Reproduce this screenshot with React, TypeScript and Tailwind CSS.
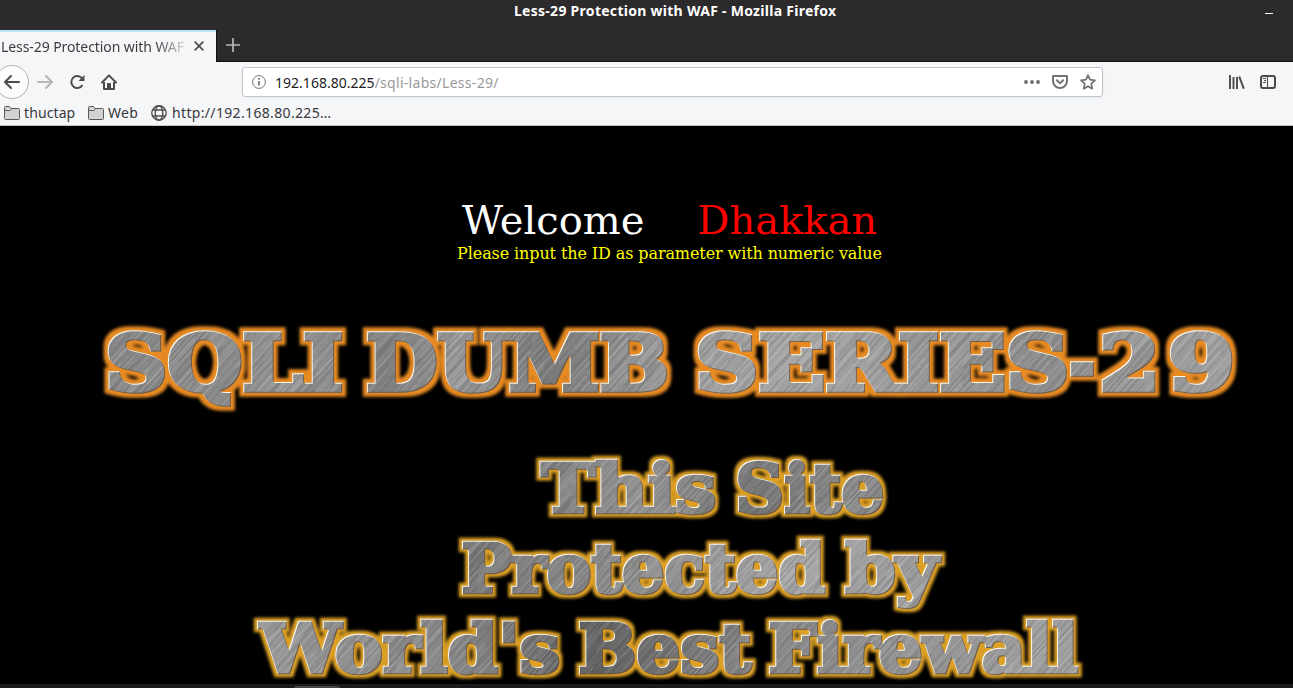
import React from "react";

type Word = { text: string; x: number; y: number; width: number; size: number };

const title: Word[] = [
  { text: "SQLI", x: 105, y: 80, width: 238, size: 77 },
  { text: "DUMB", x: 366, y: 80, width: 303, size: 77 },
  { text: "SERIES", x: 695, y: 80, width: 374, size: 77 },
  { text: "-", x: 1069, y: 80, width: 26, size: 77 },
  { text: "2", x: 1099, y: 80, width: 61, size: 77 },
  { text: "9", x: 1168, y: 80, width: 67, size: 77 },
];

const notice: Word[] = [
  { text: "This", x: 541, y: 202, width: 175, size: 67 },
  { text: "Site", x: 735, y: 202, width: 149, size: 67 },
  { text: "Protected", x: 461, y: 282, width: 364, size: 67 },
  { text: "by", x: 845, y: 282, width: 93, size: 67 },
  { text: "World's", x: 260, y: 362, width: 300, size: 67 },
  { text: "Best", x: 578, y: 362, width: 173, size: 67 },
  { text: "Firewall", x: 768, y: 362, width: 310, size: 67 },
];

const scratches = Array.from({ length: 160 }, (_, i) => {
  const n = Math.abs(Math.sin(i * 12.9898 + 4.1) * 43758.5453) % 1;
  return { x: (i * 47) % 120, y: i * 0.75, light: n > 0.5, opacity: Math.abs(n - 0.5) * 0.6 };
});

function Bevel({ id, glow, radius }: { id: string; glow: string; radius: number }) {
  return (
    <filter id={id} filterUnits="userSpaceOnUse" x="0" y="0" width="1293" height="374" colorInterpolationFilters="sRGB">
      <feMorphology in="SourceAlpha" operator="dilate" radius={radius} result="wide" />
      <feGaussianBlur in="wide" stdDeviation="1.7" result="soft" />
      <feFlood floodColor={glow} />
      <feComposite in2="soft" operator="in" result="halo" />
      <feOffset in="SourceAlpha" dx="1" dy="1" result="down" />
      <feFlood floodColor="#fff8e8" />
      <feComposite in2="SourceAlpha" operator="in" />
      <feComposite in2="down" operator="out" result="highlight" />
      <feOffset in="SourceAlpha" dx="-1" dy="-1" result="up" />
      <feFlood floodColor="#6d5035" floodOpacity="0.8" />
      <feComposite in2="SourceAlpha" operator="in" />
      <feComposite in2="up" operator="out" result="shade" />
      <feMerge>
        <feMergeNode in="halo" />
        <feMergeNode in="SourceGraphic" />
        <feMergeNode in="shade" />
        <feMergeNode in="highlight" />
      </feMerge>
    </filter>
  );
}

function MetalWords({ words, filter, weight }: { words: Word[]; filter: string; weight: number }) {
  return (
    <g filter={filter} fill="url(#metal)" stroke="url(#metal)" strokeWidth={weight} strokeLinejoin="miter" strokeMiterlimit="2">
      {words.map((w) => (
        <text
          key={w.text}
          x={w.x}
          y={w.y}
          fontSize={w.size}
          textLength={w.width}
          lengthAdjust="spacingAndGlyphs"
          className="font-['DejaVu_Serif',serif] font-bold"
        >
          {w.text}
        </text>
      ))}
    </g>
  );
}

function Banner() {
  return (
    <svg width="1293" height="374" viewBox="0 0 1293 374" className="block shrink-0 overflow-visible">
      <defs>
        <pattern id="scratch" width="120" height="120" patternUnits="userSpaceOnUse" patternTransform="rotate(-48)">
          {scratches.map((s, i) => (
            <React.Fragment key={i}>
              <rect x={s.x} y={s.y} width="70" height="0.75" fill={s.light ? "#ffffff" : "#303030"} opacity={s.opacity} />
              <rect x={s.x - 120} y={s.y} width="70" height="0.75" fill={s.light ? "#ffffff" : "#303030"} opacity={s.opacity} />
            </React.Fragment>
          ))}
        </pattern>
        <linearGradient id="sheenTop">
          <stop offset="0.08" stopColor="#858585" />
          <stop offset="0.22" stopColor="#929292" />
          <stop offset="0.3" stopColor="#828282" />
          <stop offset="0.36" stopColor="#969696" />
          <stop offset="0.42" stopColor="#7c7c7c" />
          <stop offset="0.56" stopColor="#a3a3a3" />
          <stop offset="0.66" stopColor="#a0a0a0" />
          <stop offset="0.8" stopColor="#8c8c8c" />
          <stop offset="0.95" stopColor="#a0a0a0" />
        </linearGradient>
        <linearGradient id="sheenMid">
          <stop offset="0.4" stopColor="#7c7c7c" />
          <stop offset="0.5" stopColor="#929292" />
          <stop offset="0.58" stopColor="#757575" />
          <stop offset="0.66" stopColor="#888888" />
        </linearGradient>
        <linearGradient id="sheenNext">
          <stop offset="0.36" stopColor="#777777" />
          <stop offset="0.5" stopColor="#8e8e8e" />
          <stop offset="0.62" stopColor="#a8a8a8" />
          <stop offset="0.72" stopColor="#999999" />
        </linearGradient>
        <linearGradient id="sheenLow">
          <stop offset="0.2" stopColor="#999999" />
          <stop offset="0.36" stopColor="#858585" />
          <stop offset="0.46" stopColor="#5f5f5f" />
          <stop offset="0.58" stopColor="#858585" />
          <stop offset="0.82" stopColor="#a0a0a0" />
        </linearGradient>
        <pattern id="metal" width="1293" height="374" patternUnits="userSpaceOnUse">
          <rect width="1293" height="110" fill="url(#sheenTop)" />
          <rect y="110" width="1293" height="108" fill="url(#sheenMid)" />
          <rect y="218" width="1293" height="88" fill="url(#sheenNext)" />
          <rect y="306" width="1293" height="68" fill="url(#sheenLow)" />
          <rect width="1293" height="374" fill="url(#scratch)" />
        </pattern>
        <Bevel id="orangeGlow" glow="#e78a22" radius={4} />
        <Bevel id="goldGlow" glow="#dda024" radius={3} />
      </defs>
      <MetalWords words={title} filter="url(#orangeGlow)" weight={5.5} />
      <MetalWords words={notice} filter="url(#goldGlow)" weight={4.5} />
    </svg>
  );
}

function Folder() {
  return (
    <svg width="16" height="14" viewBox="0 0 16 14" className="mt-px shrink-0" fill="#d2d2d4" stroke="#5a5a5c">
      <path d="M.5 12.5V1.5a1 1 0 0 1 1-1h4l1.500 2h7.500a1 1 0 0 1 1 1v9a1 1 0 0 1-1 1h-13a1 1 0 0 1-1-1ZM.5 4.500H6l1.500-2" />
    </svg>
  );
}

function TitleBar() {
  return (
    <header className="flex h-[30px] shrink-0 items-start bg-[#2d2a2b] text-white">
      <div className="ml-[514px] w-[323px] whitespace-nowrap font-['Noto_Sans',sans-serif] text-[14px] leading-[22px] font-bold tracking-[0.28px]">
        Less-29 Protection with WAF - Mozilla Firefox
      </div>
      <div className="mt-[13px] ml-[428px] h-px w-2 bg-white" />
    </header>
  );
}

function Tabs() {
  return (
    <div className="flex h-8 shrink-0 bg-[#2d2a2b]">
      <div className="flex w-[216px] items-center border-t-2 border-[#b9e5f7] bg-[#f5f6f7] pb-[2px] pl-px">
        <div className="w-[188px] overflow-hidden whitespace-nowrap bg-linear-to-r from-[#38383d] from-82% to-transparent bg-clip-text text-[14px] tracking-[-0.08px] text-transparent">
          Less-29 Protection with WAF
        </div>
        <svg width="10" height="10" viewBox="0 0 10 10" className="ml-[5px]" stroke="#4c4c4e" strokeWidth="1.700">
          <path d="m.7.7 8.600 8.600M9.300.7.7 9.300" />
        </svg>
      </div>
      <div className="flex flex-1 items-center border-b border-l border-[#121011] pb-px pl-[9px]">
        <svg width="14" height="14" viewBox="0 0 14 14" stroke="#b8b7b8" strokeWidth="1.700">
          <path d="M7 0v14M0 7h14" />
        </svg>
      </div>
    </div>
  );
}

function NavBar() {
  return (
    <div className="flex h-10 shrink-0 items-center">
      <div className="-ml-[5px] flex size-[34px] shrink-0 items-center justify-center rounded-full border border-[#b1b1b3] bg-[#fcfcfd]">
        <svg width="16" height="14" viewBox="0 0 16 14" fill="none" stroke="#4c4c4e" strokeWidth="2" strokeLinecap="round" strokeLinejoin="round">
          <path d="M15 7H1.500M7 1 1 7l6 6" />
        </svg>
      </div>
      <svg width="16" height="14" viewBox="0 0 16 14" className="ml-2" fill="none" stroke="#b5b6b8" strokeWidth="2" strokeLinecap="round" strokeLinejoin="round">
        <path d="M1 7h13.500M9 1l6 6-6 6" />
      </svg>
      <svg width="16" height="16" viewBox="0 0 16 16" className="ml-4" fill="none" stroke="#4c4c4e" strokeWidth="2">
        <path d="M13.200 4.500a6 6 0 1 0 .3 6.500" />
        <path d="M15.500 1v6h-6Z" fill="#4c4c4e" stroke="none" />
      </svg>
      <svg width="16" height="16" viewBox="0 0 16 16" className="ml-4" fill="none" stroke="#4c4c4e" strokeWidth="2" strokeLinejoin="round">
        <path d="M1 8.500 8 1.400l7 7.100" strokeLinecap="round" />
        <path d="M3 8v7h10V8" />
        <path d="M6.500 15V9.500h3V15" fill="#4c4c4e" strokeWidth="1" />
      </svg>
      <div className="ml-[125px] flex h-[30px] w-[861px] items-center rounded-[3px] border border-[#bfc3cd] bg-white pr-1.5 pl-[9px] shadow-[0_1px_3px_rgba(0,0,0,0.05)]">
        <svg width="14" height="14" viewBox="0 0 14 14" fill="none" stroke="#747476">
          <circle cx="7" cy="7" r="6.400" />
          <path d="M7 6v4.500M7 3v1.700" strokeWidth="1.700" />
        </svg>
        <div className="ml-[9px] flex-1 whitespace-nowrap text-[14px] tracking-[0.29px] text-[#98989a]">
          <span className="tracking-[0.02px] text-[#1c1c1f]">192.168.80.225</span>/sqli-labs/Less-29/
        </div>
        <svg width="16" height="4" viewBox="0 0 16 4" fill="#747476">
          <circle cx="2" cy="2" r="2" />
          <circle cx="8" cy="2" r="2" />
          <circle cx="14" cy="2" r="2" />
        </svg>
        <svg width="16" height="14" viewBox="0 0 16 14" className="ml-3" fill="none" stroke="#747476" strokeWidth="2" strokeLinecap="round" strokeLinejoin="round">
          <path d="M1 1h14v5a7 7 0 0 1-14 0Z" />
          <path d="m4.800 5.200 3.200 3 3.200-3" />
        </svg>
        <svg width="16" height="16" viewBox="0 0 16 16" className="ml-3" fill="none" stroke="#747476" strokeWidth="1.800" strokeLinejoin="round">
          <path d="m8 1.200 2 4.500 4.900.6-3.600 3.400.9 5L8 12.200l-4.200 2.500.9-5L1.100 6.300 6 5.700Z" />
        </svg>
      </div>
      <svg width="16" height="14" viewBox="0 0 16 14" className="ml-[126px]" stroke="#4c4c4e" strokeWidth="2">
        <path d="M1 0v14M4.500 2v12M8 2v12" strokeWidth="1.900" />
        <path d="m10.200 1.500 4.600 12.200" />
      </svg>
      <svg width="16" height="14" viewBox="0 0 16 14" className="ml-[15px]" fill="none" stroke="#4c4c4e">
        <rect x="1" y="1" width="14" height="12" rx="2" strokeWidth="2" />
        <path d="M7.500 1v12" />
        <path d="M3 3.500h3M4 5.500h2M3 7.500h3" />
      </svg>
    </div>
  );
}

function Bookmarks() {
  return (
    <div className="flex h-6 shrink-0 items-center border-b border-[#c2c3c6] pb-[2px] pl-1 text-[14px] whitespace-nowrap text-[#38383d]">
      <Folder />
      <span className="ml-1 w-16 tracking-[0.1px]">thuctap</span>
      <Folder />
      <span className="ml-1 w-[43px] tracking-[0.3px]">Web</span>
      <svg width="16" height="16" viewBox="0 0 16 16" className="shrink-0" fill="none" stroke="#505052" strokeWidth="1.400">
        <circle cx="8" cy="8" r="7.200" />
        <ellipse cx="8" cy="8" rx="3.800" ry="7.200" />
        <path d="M1.500 5h13M1.500 11h13" />
      </svg>
      <span className="ml-[5px] tracking-[0.34px]">http://192.168.80.225…</span>
    </div>
  );
}

export default function App() {
  return (
    <div className="flex h-[688px] w-[1293px] flex-col overflow-hidden bg-black font-['Noto_Sans',sans-serif]">
      <TitleBar />
      <Tabs />
      <div className="flex h-16 shrink-0 flex-col bg-[#f5f6f7]">
        <NavBar />
        <Bookmarks />
      </div>
      <main className="flex h-[558px] flex-col font-['DejaVu_Serif',serif]">
        <div className="flex h-[184px] shrink-0 flex-col items-center pt-[71px] pl-[46px]">
          <div className="flex h-[47px] gap-[53px] text-[40px] leading-[47px]">
            <span className="text-white">Welcome</span>
            <span className="text-[#ff0000]">Dhakkan</span>
          </div>
          <div className="text-[16px] leading-[19px] tracking-[-0.1px] text-[#ffff00]">
            Please input the ID as parameter with numeric value
          </div>
        </div>
        <Banner />
      </main>
      <div className="flex h-1 shrink-0 items-end bg-[#1b1b1c] pl-[294px]">
        <div className="h-0.5 w-[46px] rounded-t bg-[#454546]" />
      </div>
    </div>
  );
}
